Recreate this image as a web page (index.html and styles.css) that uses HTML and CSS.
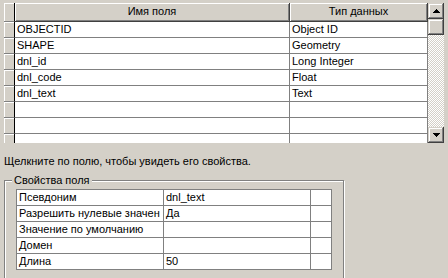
FILE: index.html
```html
<!DOCTYPE html>
<html lang="ru">
<head>
    <meta charset="UTF-8">
    <title>Поля</title>
    <link rel="stylesheet" href="styles.css">
</head>
<body>

    <!-- таблица полей -->
    <div class="grid-box">
        <div class="grid">
            <div class="sel head"></div>
            <div class="head">Имя поля</div>
            <div class="head">Тип данных</div>

            <div class="sel"></div><div class="cell">OBJECTID</div><div class="cell">Object ID</div>
            <div class="sel"></div><div class="cell">SHAPE</div><div class="cell">Geometry</div>
            <div class="sel"></div><div class="cell">dnl_id</div><div class="cell">Long Integer</div>
            <div class="sel"></div><div class="cell">dnl_code</div><div class="cell">Float</div>
            <div class="sel"></div><div class="cell">dnl_text</div><div class="cell">Text</div>
            <div class="sel"></div><div class="cell"></div><div class="cell"></div>
            <div class="sel"></div><div class="cell"></div><div class="cell"></div>
            <div class="sel"></div><div class="cell"></div><div class="cell"></div>
        </div>
        <div class="scrollbar">
            <div class="sb-btn">
                <svg width="7" height="4" viewBox="0 0 7 4"><path d="M3 0h1v1h1v1h1v1h1v1H0V3h1V2h1V1h1z"/></svg>
            </div>
            <div class="sb-btn"></div>
            <div class="sb-track"></div>
            <div class="sb-btn">
                <svg width="7" height="4" viewBox="0 0 7 4"><path d="M0 0h7v1H6v1H5v1H4v1H3V3H2V2H1V1H0z"/></svg>
            </div>
        </div>
    </div>

    <p class="hint">Щелкните по полю, чтобы увидеть его свойства.</p>

    <fieldset class="group">
        <legend>Свойства поля</legend>
        <div class="props">
            <div>Псевдоним</div><div>dnl_text</div><div></div>
            <div>Разрешить нулевые значен</div><div>Да</div><div></div>
            <div>Значение по умолчанию</div><div></div><div></div>
            <div>Домен</div><div></div><div></div>
            <div>Длина</div><div>50</div><div></div>
        </div>
    </fieldset>

</body>
</html>
```

FILE: styles.css
```css
* {
    box-sizing: border-box;
}
body {
    margin: 0;
    background-color: #d4d0c8;
    font-family: "Liberation Sans", Arial, sans-serif;
    font-size: 11px;
    color: #000;
}
.grid-box {
    display: flex;
    margin: 3px 4px 0 4px;
    height: 140px;
    overflow: hidden;
}
.grid {
    display: grid;
    grid-template-columns: 11px 275px 138px;
    grid-template-rows: 19px;
    grid-auto-rows: 16px;
    align-content: start;
}
.head {
    background-color: #d4d0c8;
    border-right: 1px solid #404040;
    border-bottom: 1px solid #404040;
    box-shadow: inset 1px 1px #fff, inset -1px -1px #808080;
    text-align: center;
    line-height: 17px;
}
.sel {
    background-color: #d4d0c8;
    border-right: 1px solid #000;
    border-bottom: 1px solid #808080;
    box-shadow: inset 1px 1px #fff;
}
.cell {
    background-color: #fff;
    border-right: 1px solid #808080;
    border-bottom: 1px solid #808080;
    padding-left: 2px;
    line-height: 15px;
    white-space: nowrap;
    overflow: hidden;
}
.scrollbar {
    width: 16px;
    display: flex;
    flex-direction: column;
}
.sb-btn {
    flex: none;
    height: 16px;
    display: flex;
    align-items: center;
    justify-content: center;
    background-color: #d4d0c8;
    box-shadow: inset -1px -1px #404040, inset 1px 1px #d4d0c8, inset -2px -2px #808080, inset 2px 2px #fff;
}
.sb-btn svg {
    display: block;
    shape-rendering: crispEdges;
}
.sb-track {
    flex: 1;
    background: repeating-conic-gradient(#fff 0 25%, #d4d0c8 0 50%) 0 0 / 2px 2px;
}
.hint {
    margin: 12px 0 0 4px;
    line-height: 13px;
}
.group {
    margin: 6px 0 0 4px;
    width: 340px;
    padding: 2px 0 20px 11px;
    border: 1px solid #808080;
    box-shadow: inset 1px 1px #fff, 1px 1px #fff;
}
.group legend {
    margin-left: -4px;
    padding: 0 2px;
    line-height: 13px;
    background-color: #d4d0c8;
}
.props {
    display: grid;
    grid-template-columns: 147px 147px 21px;
    width: 316px;
    border-left: 1px solid #808080;
    border-top: 1px solid #808080;
}
.props div {
    height: 16px;
    background-color: #fff;
    border-right: 1px solid #808080;
    border-bottom: 1px solid #808080;
    padding-left: 2px;
    line-height: 15px;
    white-space: nowrap;
    overflow: hidden;
}
```
